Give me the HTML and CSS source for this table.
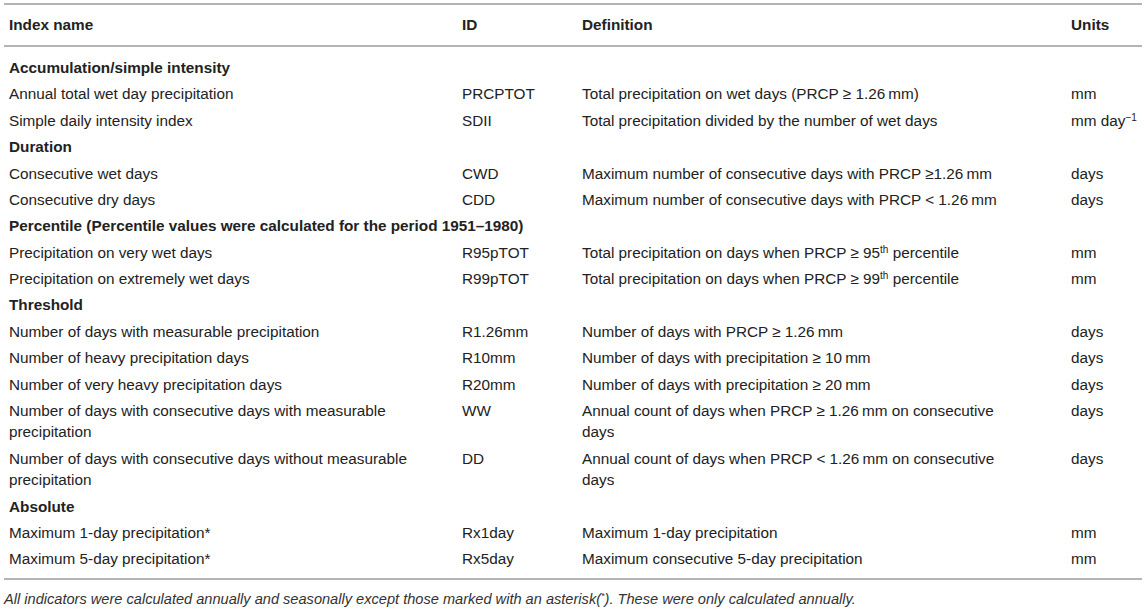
FILE: index.html
```html
<!DOCTYPE html>
<html>
<head>
<meta charset="utf-8">
<link rel="stylesheet" href="styles.css">
</head>
<body>
<div class="wrap">
<table class="idx">
  <colgroup>
    <col class="c1"><col class="c2"><col class="c3"><col class="c4">
  </colgroup>
  <thead>
    <tr><th>Index name</th><th>ID</th><th>Definition</th><th>Units</th></tr>
  </thead>
  <tbody>
    <tr class="grp first"><td colspan="4">Accumulation/simple intensity</td></tr>
    <tr><td>Annual total wet day precipitation</td><td>PRCPTOT</td><td class="def">Total precipitation on wet days (PRCP ≥ 1.26&#8201;mm)</td><td>mm</td></tr>
    <tr><td>Simple daily intensity index</td><td>SDII</td><td class="def">Total precipitation divided by the number of wet days</td><td>mm day<sup>−1</sup></td></tr>
    <tr class="grp"><td colspan="4">Duration</td></tr>
    <tr><td>Consecutive wet days</td><td>CWD</td><td class="def">Maximum number of consecutive days with PRCP ≥1.26&#8201;mm</td><td>days</td></tr>
    <tr><td>Consecutive dry days</td><td>CDD</td><td class="def">Maximum number of consecutive days with PRCP &lt; 1.26&#8201;mm</td><td>days</td></tr>
    <tr class="grp"><td colspan="4">Percentile (Percentile values were calculated for the period 1951–1980)</td></tr>
    <tr><td>Precipitation on very wet days</td><td>R95pTOT</td><td class="def">Total precipitation on days when PRCP ≥ 95<sup>th</sup> percentile</td><td>mm</td></tr>
    <tr><td>Precipitation on extremely wet days</td><td>R99pTOT</td><td class="def">Total precipitation on days when PRCP ≥ 99<sup>th</sup> percentile</td><td>mm</td></tr>
    <tr class="grp"><td colspan="4">Threshold</td></tr>
    <tr><td>Number of days with measurable precipitation</td><td>R1.26mm</td><td class="def">Number of days with PRCP ≥ 1.26&#8201;mm</td><td>days</td></tr>
    <tr><td>Number of heavy precipitation days</td><td>R10mm</td><td class="def">Number of days with precipitation ≥ 10&#8201;mm</td><td>days</td></tr>
    <tr><td>Number of very heavy precipitation days</td><td>R20mm</td><td class="def">Number of days with precipitation ≥ 20&#8201;mm</td><td>days</td></tr>
    <tr><td>Number of days with consecutive days with measurable precipitation</td><td>WW</td><td class="def">Annual count of days when PRCP ≥ 1.26&#8201;mm on consecutive days</td><td>days</td></tr>
    <tr><td>Number of days with consecutive days without measurable precipitation</td><td>DD</td><td class="def">Annual count of days when PRCP &lt; 1.26&#8201;mm on consecutive days</td><td>days</td></tr>
    <tr class="grp"><td colspan="4">Absolute</td></tr>
    <tr><td>Maximum 1-day precipitation*</td><td>Rx1day</td><td class="def">Maximum 1-day precipitation</td><td>mm</td></tr>
    <tr class="last"><td>Maximum 5-day precipitation*</td><td>Rx5day</td><td class="def">Maximum consecutive 5-day precipitation</td><td>mm</td></tr>
  </tbody>
</table>
<p class="note">All indicators were calculated annually and seasonally except those marked with an asterisk(<sup>*</sup>). These were only calculated annually.</p>
</div>
</body>
</html>
```

FILE: styles.css
```css
html, body {
  margin: 0;
  padding: 0;
  background: #ffffff;
}
body {
  font-family: "Liberation Sans", Arial, Helvetica, sans-serif;
  color: #222222;
}
.wrap {
  padding: 3px 4px 0 4px;
}
.idx {
  width: 1138px;
  border-collapse: collapse;
  table-layout: fixed;
  font-size: 15.3px;
  line-height: 21.5px;
}
.c1 { width: 453px; }
.c2 { width: 120px; }
.c3 { width: 489px; }
.c4 { width: 76px; }
.idx thead th {
  text-align: left;
  font-weight: bold;
  padding: 9px 5px 9px 5px;
  border-top: 2px solid #b4b4b4;
  border-bottom: 2px solid #b4b4b4;
}
.idx td {
  padding: 2.45px 5px;
  vertical-align: top;
}
.idx td.def {
  padding-right: 38px;
}
.idx tr.grp td {
  font-weight: bold;
}
.idx tr.first td {
  padding-top: 10.5px;
}
.idx tr.last td {
  padding-bottom: 8px;
  border-bottom: 2px solid #b4b4b4;
}
.idx sup {
  font-size: 10px;
  line-height: 0;
  vertical-align: 5px;
}
.note {
  margin: 0;
  padding: 11.5px 0 0 0;
  font-size: 14.6px;
  font-style: italic;
  color: #333333;
}
.note sup {
  font-size: 9px;
  line-height: 0;
  vertical-align: 5px;
}
```
